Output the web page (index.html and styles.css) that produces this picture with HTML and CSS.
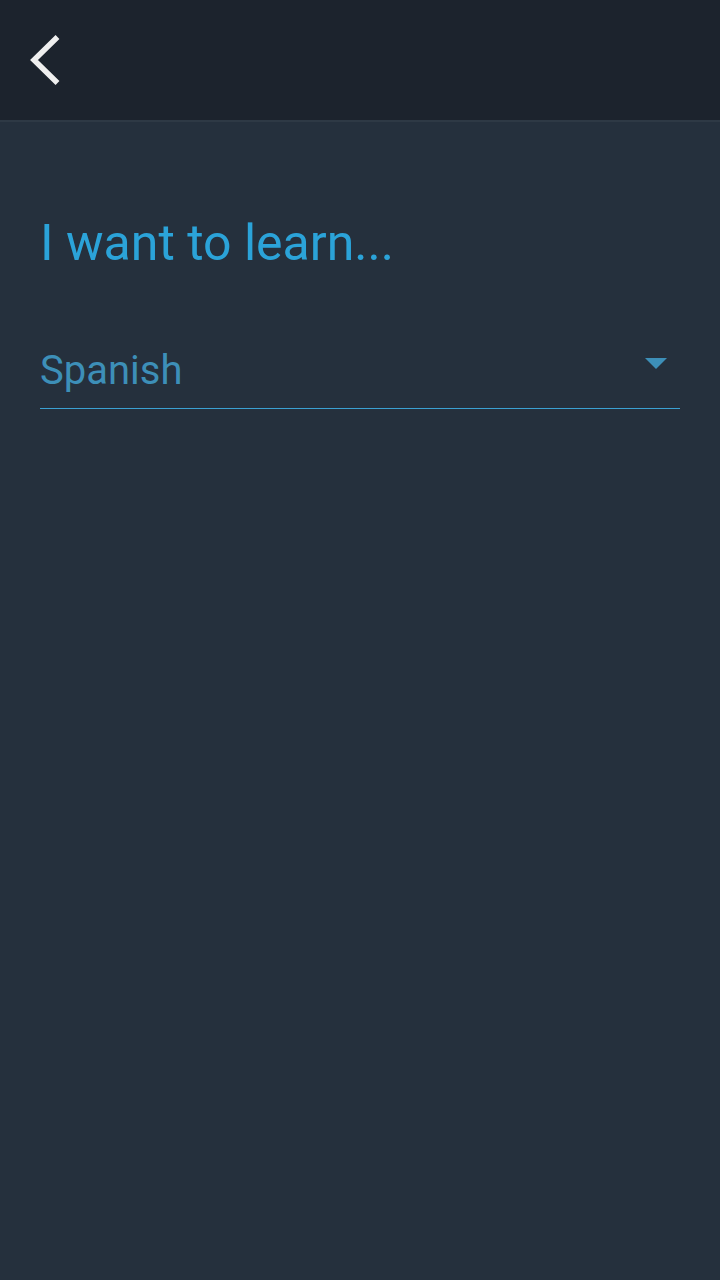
FILE: index.html
```html
<!DOCTYPE html>
<html>
<head>
<meta charset="utf-8">
<link rel="stylesheet" href="styles.css">
</head>
<body>
<header class="topbar">
  <button class="back" aria-label="Back">
    <svg width="40" height="60" viewBox="0 0 40 60"><path d="M29.5 7 L6 30 L29.5 53" fill="none" stroke="#efefef" stroke-width="5.5" stroke-linecap="butt" stroke-linejoin="miter"/></svg>
  </button>
</header>
<main class="content">
  <h1 class="title">I want to learn...</h1>
  <div class="select">
    <span class="value">Spanish</span>
    <span class="caret"></span>
  </div>
</main>
</body>
</html>
```
FILE: styles.css
```css
html, body { margin: 0; padding: 0; }
body {
  width: 720px;
  height: 1280px;
  background: #25303d;
  font-family: Roboto, "Noto Sans", sans-serif;
  overflow: hidden;
}
.topbar {
  height: 120px;
  background: #1c232d;
  border-bottom: 2px solid #2e3945;
  display: flex;
  align-items: center;
}
.back {
  background: none;
  border: 0;
  padding: 0;
  margin-left: 28px;
  display: flex;
}
.content {
  padding: 0 40px;
}
.title {
  margin: 91px 0 0 0;
  font-weight: 400;
  font-size: 50px;
  line-height: 60px;
  height: 60px;
  color: #2ba3d9;
}
.select {
  margin-top: 75px;
  height: 60px;
  border-bottom: 1px solid #3ba0d2;
  display: flex;
  justify-content: space-between;
  align-items: flex-start;
}
.value {
  font-size: 40px;
  line-height: 48px;
  color: #3d8fb8;
  margin-top: -1px;
}
.caret {
  width: 0;
  height: 0;
  border-left: 11px solid transparent;
  border-right: 11px solid transparent;
  border-top: 11px solid #3d8fb8;
  margin-right: 13px;
  margin-top: 10px;
}
```
